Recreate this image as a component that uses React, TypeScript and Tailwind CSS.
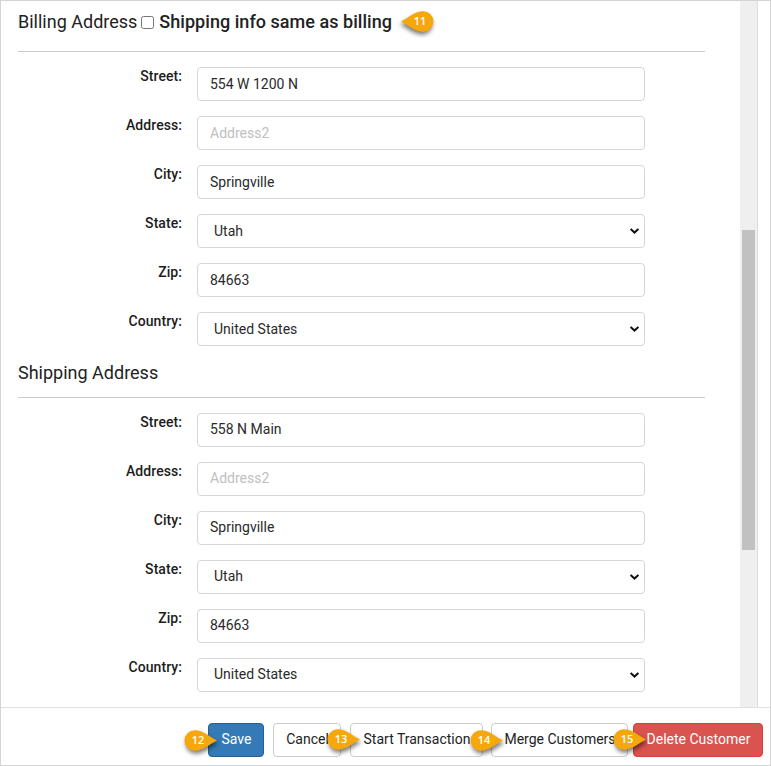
type FieldDef = { label: string; value?: string; placeholder?: string; select?: boolean };

const billing: FieldDef[] = [
  { label: 'Street:', value: '554 W 1200 N' },
  { label: 'Address:', placeholder: 'Address2' },
  { label: 'City:', value: 'Springville' },
  { label: 'State:', value: 'Utah', select: true },
  { label: 'Zip:', value: '84663' },
  { label: 'Country:', value: 'United States', select: true },
];

const shipping: FieldDef[] = billing.map((f) => (f.label === 'Street:' ? { ...f, value: '558 N Main' } : f));

function Field({ label, value, placeholder, select, raised }: FieldDef & { raised?: boolean }) {
  const pad = raised ? 'pb-[2px]' : '';
  return (
    <div className="flex h-[34px] gap-[15px]">
      <label className="w-[164px] shrink-0 text-right text-sm leading-[18px] font-medium tracking-[0.06px] text-[#1c1c1c]">{label}</label>
      {select ? (
        <div className="flex w-[448px] items-center justify-between rounded border border-[#d6d6d6] pr-[5px] pl-4 text-sm leading-none text-[#2a2a2a]">
          <span className={pad}>{value}</span>
          <svg width="9" height="6" viewBox="0 0 9 6" fill="none" stroke="#111" strokeWidth="2">
            <path d="M0.6 0.9 4.5 4.6 8.4 0.9" />
          </svg>
        </div>
      ) : (
        <input
          className={`w-[448px] rounded border border-[#d6d6d6] px-3 text-sm text-[#2a2a2a] outline-none placeholder:text-[#c0c0c0] ${pad}`}
          defaultValue={value}
          placeholder={placeholder}
        />
      )}
    </div>
  );
}

function Fields({ items, raised }: { items: FieldDef[]; raised?: boolean }) {
  return (
    <div className="mt-[15px] flex flex-col gap-[15px]">
      {items.map((f) => (
        <Field key={f.label} {...f} raised={raised} />
      ))}
    </div>
  );
}

function Marker({ n, className, left }: { n: number; className: string; left?: boolean }) {
  return (
    <div className={`absolute h-[21px] w-[33px] ${className}`}>
      <svg
        className={`absolute inset-0 overflow-visible drop-shadow-[-1px_3px_2px_rgba(0,0,0,0.5)] ${left ? '' : '-scale-x-100'}`}
        width="33"
        height="21"
        viewBox="0 0 33 21"
      >
        <path d="M0 10.5C7 7 14 0.3 22.3 0.3a10.2 10.2 0 0 1 0 20.4C14 20.7 7 14 0 10.5Z" fill="#f6a70c" />
      </svg>
      <span
        className={`absolute top-0 w-5 text-center font-['Open_Sans',sans-serif] text-[11px] leading-[20px] font-semibold text-white ${left ? 'left-[9px]' : 'left-1'}`}
      >
        {n}
      </span>
    </div>
  );
}

const btn = 'h-[34px] shrink-0 rounded border pb-[2px] pl-px text-sm whitespace-nowrap';

export default function App() {
  return (
    <div className="relative flex h-[766px] w-[771px] flex-col overflow-hidden border border-[#d4d4d4] bg-white font-[Roboto,sans-serif]">
      <div className="flex h-[706px] w-[757px] border-r border-[#dcdcdc]">
        <main className="w-[739px] pl-[17px]">
          <div className="flex h-[50px] items-center pb-2 text-[#222]">
            <h2 className="text-lg leading-6">Billing Address</h2>
            <input type="checkbox" className="mr-[5px] ml-1 size-[13px] appearance-none rounded-[2.5px] border border-[#767676]" />
            <span className="text-lg leading-6 font-medium tracking-[0.04px]">Shipping info same as billing</span>
          </div>
          <hr className="w-[687px] border-[#ccc]" />
          <Fields items={billing} />
          <h2 className="mt-[15px] h-9 text-lg leading-6 text-[#222]">Shipping Address</h2>
          <hr className="w-[687px] border-[#ccc]" />
          <Fields items={shipping} raised />
        </main>
        <div className="w-[17px] bg-[#efefef] pt-[229px] pl-[2px]">
          <div className="h-[320px] w-[13px] bg-[#c1c1c1]" />
        </div>
      </div>
      <footer className="flex h-[58px] border-t border-[#e0e0e0] pt-[15px] pl-[207px] text-[#222]">
        <button className={`${btn} w-14 border-[#265f96] bg-[#337ab7] text-white`}>Save</button>
        <button className={`${btn} ml-[9px] w-[68px] border-[#ccc] bg-white`}>Cancel</button>
        <button className={`${btn} ml-[9px] w-[133px] border-[#ccc] bg-white`}>Start Transaction</button>
        <button className={`${btn} ml-2 w-[137px] border-[#ccc] bg-white`}>Merge Customers</button>
        <button className={`${btn} ml-[5px] w-[130px] border-[#d43f3a] bg-[#d9534f] text-white`}>Delete Customer</button>
      </footer>
      <Marker n={11} left className="top-[10px] left-[400px]" />
      <Marker n={12} className="top-[729px] left-[183px]" />
      <Marker n={13} className="top-[728px] left-[326px]" />
      <Marker n={14} className="top-[729px] left-[469px]" />
      <Marker n={15} className="top-[728px] left-[612px]" />
    </div>
  );
}
